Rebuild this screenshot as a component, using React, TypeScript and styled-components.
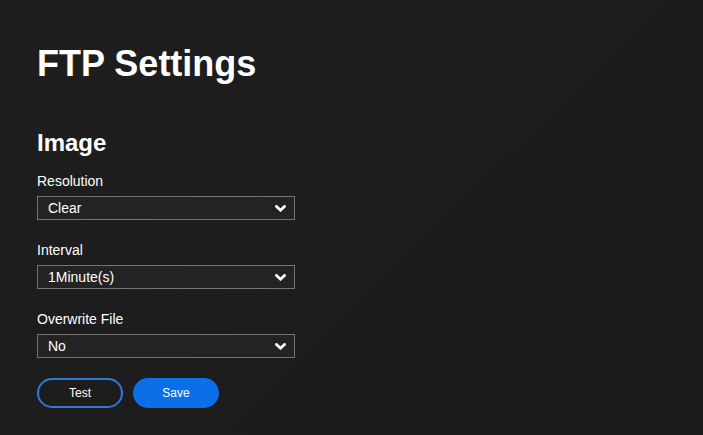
import React from "react";
import styled, { createGlobalStyle } from "styled-components";

const GlobalStyle = createGlobalStyle`
  html, body { margin: 0; padding: 0; background: #1d1d1d; }
  body { font-family: "Liberation Sans", Arial, sans-serif; color: #fff; }
`;

const Page = styled.div`
  width: 703px;
  height: 435px;
  box-sizing: border-box;
  padding: 43px 0 0 37px;
  background: linear-gradient(135deg, #1e1e1e 0%, #1b1b1b 100%);
  overflow: hidden;
`;

const Title = styled.h1`
  margin: 0;
  font-size: 36px;
  line-height: 41px;
  font-weight: 700;
  color: #fff;
`;

const Section = styled.h2`
  margin: 45px 0 0;
  font-size: 24px;
  line-height: 28px;
  font-weight: 700;
  color: #fff;
`;

const Fields = styled.div`
  display: flex;
  flex-direction: column;
  gap: 22px;
  margin-top: 16px;
`;

const Field = styled.div`
  display: flex;
  flex-direction: column;
  gap: 7px;
`;

const Label = styled.label`
  font-size: 14px;
  line-height: 16px;
  color: #fff;
`;

const SelectWrap = styled.div`
  position: relative;
  width: 258px;
  height: 24px;
`;

const Select = styled.select`
  appearance: none;
  -webkit-appearance: none;
  width: 100%;
  height: 100%;
  box-sizing: border-box;
  margin: 0;
  padding: 0 0 1px 10px;
  background: #232323;
  border: 1px solid #747474;
  border-radius: 0;
  color: #fff;
  font-family: "Liberation Sans", Arial, sans-serif;
  font-size: 14px;
  outline: none;
`;

const Chevron = styled.svg`
  position: absolute;
  right: 9px;
  top: 9px;
  width: 11px;
  height: 7px;
  pointer-events: none;
`;

const Buttons = styled.div`
  display: flex;
  gap: 10px;
  margin-top: 20px;
`;

const Button = styled.button<{ $primary?: boolean }>`
  width: 86px;
  height: 30px;
  box-sizing: border-box;
  border-radius: 15px;
  border: 2px solid ${(p) => (p.$primary ? "#0b6fe8" : "#2a7ad8")};
  background: ${(p) => (p.$primary ? "#0b6fe8" : "transparent")};
  color: #fff;
  font-family: "Liberation Sans", Arial, sans-serif;
  font-size: 12px;
  padding: 0;
  cursor: pointer;
`;

const fields = [
  { label: "Resolution", value: "Clear" },
  { label: "Interval", value: "1Minute(s)" },
  { label: "Overwrite File", value: "No" },
];

export default function App() {
  return (
    <>
      <GlobalStyle />
      <Page>
        <Title>FTP Settings</Title>
        <Section>Image</Section>
        <Fields>
          {fields.map((f) => (
            <Field key={f.label}>
              <Label>{f.label}</Label>
              <SelectWrap>
                <Select defaultValue={f.value}>
                  <option value={f.value}>{f.value}</option>
                </Select>
                <Chevron viewBox="0 0 11 7">
                  <path
                    d="M1.5 1.5 L5.5 5.2 L9.5 1.5"
                    fill="none"
                    stroke="#fff"
                    strokeWidth="2.8"
                    strokeLinecap="square"
                  />
                </Chevron>
              </SelectWrap>
            </Field>
          ))}
        </Fields>
        <Buttons>
          <Button>Test</Button>
          <Button $primary>Save</Button>
        </Buttons>
      </Page>
    </>
  );
}
